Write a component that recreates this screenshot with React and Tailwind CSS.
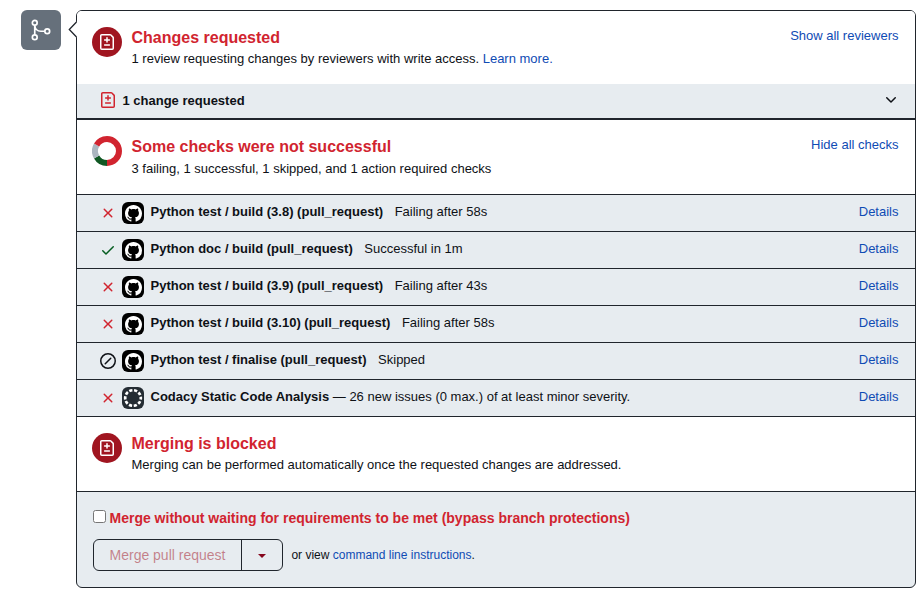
const PATHS = {
  x: "M3.72 3.72a.75.75 0 0 1 1.06 0L8 6.94l3.22-3.22a.749.749 0 0 1 1.275.326.749.749 0 0 1-.215.734L9.06 8l3.22 3.22a.749.749 0 0 1-.326 1.275.749.749 0 0 1-.734-.215L8 9.06l-3.22 3.22a.751.751 0 0 1-1.042-.018.751.751 0 0 1-.018-1.042L6.94 8 3.72 4.78a.75.75 0 0 1 0-1.06Z",
  check:
    "M13.78 4.22a.75.75 0 0 1 0 1.06l-7.25 7.25a.75.75 0 0 1-1.06 0L2.22 9.28a.751.751 0 0 1 .018-1.042.751.751 0 0 1 1.042-.018L6 10.94l6.72-6.72a.75.75 0 0 1 1.06 0Z",
  skip: "M8 0a8 8 0 1 1 0 16A8 8 0 0 1 8 0ZM1.5 8a6.5 6.5 0 1 0 13 0 6.5 6.5 0 0 0-13 0Zm9.78-2.22-5.5 5.5a.749.749 0 0 1-1.275-.326.749.749 0 0 1 .215-.734l5.5-5.5a.751.751 0 0 1 1.042.018.751.751 0 0 1 .018 1.042Z",
  github:
    "M8 0c4.42 0 8 3.58 8 8a8.013 8.013 0 0 1-5.45 7.59c-.4.08-.55-.17-.55-.38 0-.27.01-1.13.01-2.2 0-.75-.25-1.23-.54-1.48 1.78-.2 3.65-.88 3.65-3.95 0-.88-.31-1.59-.82-2.15.08-.2.36-1.02-.08-2.12 0 0-.67-.22-2.2.82-.64-.18-1.32-.27-2-.27-.68 0-1.36.09-2 .27-1.53-1.03-2.2-.82-2.2-.82-.44 1.1-.16 1.92-.08 2.12-.51.56-.82 1.28-.82 2.15 0 3.06 1.86 3.75 3.64 3.95-.23.2-.44.55-.51 1.07-.46.21-1.61.55-2.33-.66-.15-.24-.6-.83-1.23-.82-.67.01-.27.38.01.53.34.19.73.9.82 1.13.16.45.68 1.31 2.69.94 0 .67.01 1.3.01 1.49 0 .21-.15.45-.55.38A7.995 7.995 0 0 1 0 8c0-4.42 3.58-8 8-8Z",
  chevronDown:
    "M12.78 5.22a.749.749 0 0 1 0 1.06l-4.25 4.25a.749.749 0 0 1-1.06 0L3.22 6.28a.749.749 0 1 1 1.06-1.06L8 8.939l3.72-3.719a.749.749 0 0 1 1.06 0Z",
};

function Icon({ name, className = "size-4" }) {
  return (
    <svg viewBox="0 0 16 16" fill="currentColor" className={`shrink-0 ${className}`}>
      <path d={PATHS[name]} />
    </svg>
  );
}

function FileDiffIcon({ className = "" }) {
  return (
    <svg viewBox="0 0 16 16" fill="none" stroke="currentColor" strokeWidth="1.5" className={`size-4 shrink-0 ${className}`}>
      <path d="M2.75.75h8.4a1 1 0 0 1 .7.3l2.1 2.1a1 1 0 0 1 .3.7v10.3a1 1 0 0 1-1 1H2.75a1 1 0 0 1-1-1V1.75a1 1 0 0 1 1-1Z" />
      <path d="M8 3.8V8M5.6 5.9h4.8M5.6 11h4.8" strokeLinecap="round" />
    </svg>
  );
}

function MergeIcon() {
  return (
    <svg viewBox="0 0 24 24" fill="none" stroke="currentColor" strokeWidth="1.7" className="size-6">
      <circle cx="5.75" cy="4.75" r="2.4" />
      <circle cx="5.75" cy="19.25" r="2.4" />
      <circle cx="18.25" cy="13.25" r="2.4" />
      <path d="M5.75 7.25v9.5M5.75 7.25c.3 3.6 2.8 6 6.2 6h3.9" />
    </svg>
  );
}

function BlockedBadge() {
  return (
    <div className="flex size-[30px] shrink-0 items-center justify-center rounded-full bg-[#a01520] text-white">
      <FileDiffIcon />
    </div>
  );
}

const DONUT = [
  { color: "#d1242f", from: 0, to: 180 },
  { color: "#105823", from: 180, to: 240 },
  { color: "#acb6c0", from: 240, to: 300 },
  { color: "#d1242f", from: 300, to: 360 },
];

function arc(from, to) {
  const at = (deg) => {
    const a = (deg * Math.PI) / 180;
    return `${15 + 12 * Math.sin(a)} ${15 - 12 * Math.cos(a)}`;
  };
  return `M${at(from)}A12 12 0 0 1 ${at(to)}`;
}

function Donut() {
  return (
    <svg viewBox="0 0 30 30" fill="none" strokeWidth="6" className="size-[30px] shrink-0">
      {DONUT.map((s) => (
        <path key={s.from} d={arc(s.from, s.to)} stroke={s.color} />
      ))}
    </svg>
  );
}

function CodacyMark() {
  return (
    <svg viewBox="0 0 22 22" className="size-[22px]">
      <circle cx="11" cy="11" r="7.8" fill="none" stroke="#fff" strokeWidth="2.7" strokeDasharray="3.2 1.7" strokeDashoffset="1.6" />
    </svg>
  );
}

function Section({ icon, title, action, children }) {
  return (
    <section className="flex bg-white px-[15px] pt-4">
      {icon}
      <div className="ml-[9.5px] flex-1">
        <h3 className="text-base leading-[22px] font-bold text-[#d1242f]">{title}</h3>
        <p className="leading-5">{children}</p>
      </div>
      {action && (
        <a href="#" className="mr-[1.5px] -mt-px leading-5 text-[#0f4bb4]">
          {action}
        </a>
      )}
    </section>
  );
}

const CHECKS = [
  { state: "x", name: "Python test / build (3.8) (pull_request)", note: "Failing after 58s" },
  { state: "check", name: "Python doc / build (pull_request)", note: "Successful in 1m" },
  { state: "x", name: "Python test / build (3.9) (pull_request)", note: "Failing after 43s" },
  { state: "x", name: "Python test / build (3.10) (pull_request)", note: "Failing after 58s" },
  { state: "skip", name: "Python test / finalise (pull_request)", note: "Skipped" },
  { state: "x", name: "Codacy Static Code Analysis", note: "— 26 new issues (0 max.) of at least minor severity.", codacy: true },
];

const STATE_COLORS = { x: "text-[#d1242f]", check: "text-[#055d20]", skip: "text-[#0e1116]" };

function CheckRow({ check }) {
  return (
    <li className="flex h-[37px] items-start border-b border-[#20252c] pr-4 pl-[23px]">
      <Icon name={check.state} className={`mt-2.5 size-4 ${STATE_COLORS[check.state]}`} />
      <span
        className={`mt-[7px] ml-1.5 flex size-[22px] shrink-0 items-center justify-center rounded-md text-white ${check.codacy ? "bg-[#242c33]" : "bg-black"}`}
      >
        {check.codacy ? <CodacyMark /> : <Icon name="github" className="size-[17px]" />}
      </span>
      <p className="mt-[7px] ml-[6.5px] flex-1 leading-5">
        <strong className="font-bold">{check.name}</strong>
        <span className={check.codacy ? "ml-[3.6px]" : "ml-[11.6px]"}>{check.note}</span>
      </p>
      <a href="#" className="mt-[7px] mr-[0.5px] leading-5 text-[#0f4bb4]">
        Details
      </a>
    </li>
  );
}

export default function App() {
  return (
    <main className="flex h-[595px] w-[922px] items-start bg-white pt-2.5 pl-[21px] font-['Liberation_Sans',Arial,sans-serif] text-[13px] text-[#0e1116]">
      <div className="flex size-10 items-center justify-center rounded-md bg-[#66707b] text-white">
        <MergeIcon />
      </div>

      <div className="relative ml-[15px] h-[578px] w-[840px]">
        <div className="flex h-full flex-col overflow-hidden rounded-md border border-[#20252c] bg-[#e7ecf0]">
          <div className="h-[73px] bg-white">
            <Section icon={<BlockedBadge />} title="Changes requested" action="Show all reviewers">
              1 review requesting changes by reviewers with write access.{" "}
              <a href="#" className="text-[#0f4bb4]">
                Learn more.
              </a>
            </Section>
          </div>
          <div className="flex h-9 items-center border-b-2 border-[#20252c] pr-4 pl-[23px]">
            <FileDiffIcon className="-mt-0.5 text-[#d1242f]" />
            <strong className="ml-[6.5px] flex-1 font-bold">1 change requested</strong>
            <Icon name="chevronDown" className="-mt-0.5 size-4" />
          </div>

          <div className="h-[75px] border-b border-[#20252c] bg-white">
            <Section
              icon={<Donut />}
              title="Some checks were not successful"
              action="Hide all checks"
            >
              <span className="mt-px block">3 failing, 1 successful, 1 skipped, and 1 action required checks</span>
            </Section>
          </div>
          <ul>
            {CHECKS.map((check) => (
              <CheckRow key={check.name} check={check} />
            ))}
          </ul>

          <div className="h-[75px] border-b border-[#20252c] bg-white">
            <Section icon={<BlockedBadge />} title="Merging is blocked">
              Merging can be performed automatically once the requested changes are addressed.
            </Section>
          </div>

          <div className="px-4 pt-[15px]">
            <label className="flex h-[21px] items-center text-sm font-bold text-[#d1242f]">
              <input type="checkbox" className="mr-[3.5px] -mt-0.5 size-[13px]" />
              Merge without waiting for requirements to be met (bypass branch protections)
            </label>
            <div className="mt-[11px] flex items-center">
              <div className="flex h-8 w-[190px] rounded-md border border-[#20252c] text-sm">
                <button className="w-[148px] border-r border-[#20252c] text-[#a0111f]/50">Merge pull request</button>
                <button className="flex flex-1 items-center justify-center text-[#86061d]">
                  <span className="mt-0.5 border-x-4 border-t-4 border-x-transparent border-t-current" />
                </button>
              </div>
              <p className="ml-[8.4px] text-xs">
                or view{" "}
                <a href="#" className="text-[#0f4bb4]">
                  command line instructions
                </a>
                .
              </p>
            </div>
          </div>
        </div>
        <svg viewBox="0 0 9 18" className="absolute top-[11px] left-[-8px] h-[18px] w-[9px]">
          <path d="M9 .5 1.3 8.5 9 16.5Z" fill="#fff" />
          <path d="M8.5 1 1.3 8.5 8.5 16" fill="none" stroke="#20252c" strokeWidth="1.3" />
        </svg>
      </div>
    </main>
  );
}
